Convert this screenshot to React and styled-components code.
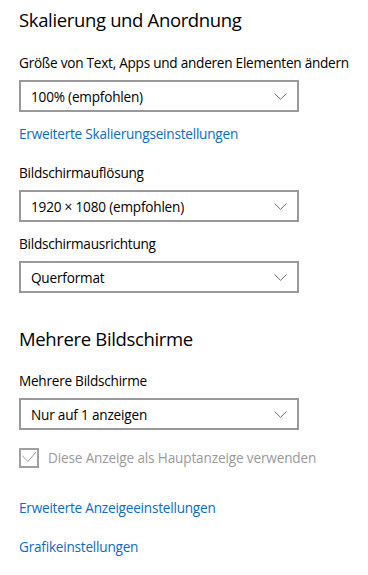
import React from "react";
import styled, { createGlobalStyle } from "styled-components";

const Global = createGlobalStyle`
  html, body { margin: 0; padding: 0; background: #ffffff; }
  body { font-family: "Open Sans", "Noto Sans", sans-serif; color: #000; }
`;

const Page = styled.div`
  display: flex;
  flex-direction: column;
  padding: 7px 0 0 19px;
  width: 368px;
  height: 575px;
  box-sizing: border-box;
`;

const Heading = styled.h2`
  margin: ${(p) => p.$mt || 0}px 0 0 0;
  font-size: 18.5px;
  line-height: 26px;
  font-weight: 400;
  letter-spacing: -0.35px;
  color: #000;
`;

const Label = styled.div`
  margin-top: ${(p) => p.$mt || 0}px;
  font-size: 13.6px;
  line-height: 20px;
  letter-spacing: -0.25px;
  color: #000;
`;

const Select = styled.div`
  margin-top: 7px;
  width: 280px;
  height: 32px;
  box-sizing: border-box;
  border: 2px solid #999999;
  display: flex;
  align-items: center;
  justify-content: space-between;
  padding: 0 10px 0 10px;
  font-size: 13.6px;
  letter-spacing: -0.2px;
  color: #000;
`;

const Link = styled.a`
  display: block;
  margin-top: ${(p) => p.$mt || 0}px;
  font-size: 13.6px;
  line-height: 20px;
  letter-spacing: -0.22px;
  color: #0a6cc4;
  text-decoration: none;
`;

const CheckRow = styled.label`
  margin-top: 18px;
  display: flex;
  align-items: center;
  gap: 9px;
  font-size: 13.6px;
  line-height: 20px;
  letter-spacing: -0.15px;
  color: #9a9a9a;
`;

const CheckBox = styled.span`
  width: 20px;
  height: 20px;
  box-sizing: border-box;
  border: 2px solid #a0a0a0;
  display: flex;
  align-items: center;
  justify-content: center;
  flex-shrink: 0;
`;

const Chevron = () => (
  <svg width="13" height="7" viewBox="0 0 13 7" fill="none">
    <path d="M0.5 0.5 L6.5 6.3 L12.5 0.5" stroke="#6e6e6e" strokeWidth="1" />
  </svg>
);

const Dropdown = ({ value }) => (
  <Select>
    <span>{value}</span>
    <Chevron />
  </Select>
);

export default function App() {
  return (
    <>
      <Global />
      <Page>
        <Heading>Skalierung und Anordnung</Heading>
        <Label $mt={20}>Größe von Text, Apps und anderen Elementen ändern</Label>
        <Dropdown value="100% (empfohlen)" />
        <Link $mt={12}>Erweiterte Skalierungseinstellungen</Link>
        <Label $mt={19}>Bildschirmauflösung</Label>
        <Dropdown value="1920 × 1080 (empfohlen)" />
        <Label $mt={12}>Bildschirmausrichtung</Label>
        <Dropdown value="Querformat" />
        <Heading $mt={33}>Mehrere Bildschirme</Heading>
        <Label $mt={19}>Mehrere Bildschirme</Label>
        <Dropdown value="Nur auf 1 anzeigen" />
        <CheckRow>
          <CheckBox>
            <svg width="16" height="16" viewBox="0 0 16 16" fill="none">
              <path d="M1.5 6 L7 11.5 L15 2" stroke="#9a9a9a" strokeWidth="1" />
            </svg>
          </CheckBox>
          Diese Anzeige als Hauptanzeige verwenden
        </CheckRow>
        <Link $mt={30}>Erweiterte Anzeigeeinstellungen</Link>
        <Link $mt={19}>Grafikeinstellungen</Link>
      </Page>
    </>
  );
}
